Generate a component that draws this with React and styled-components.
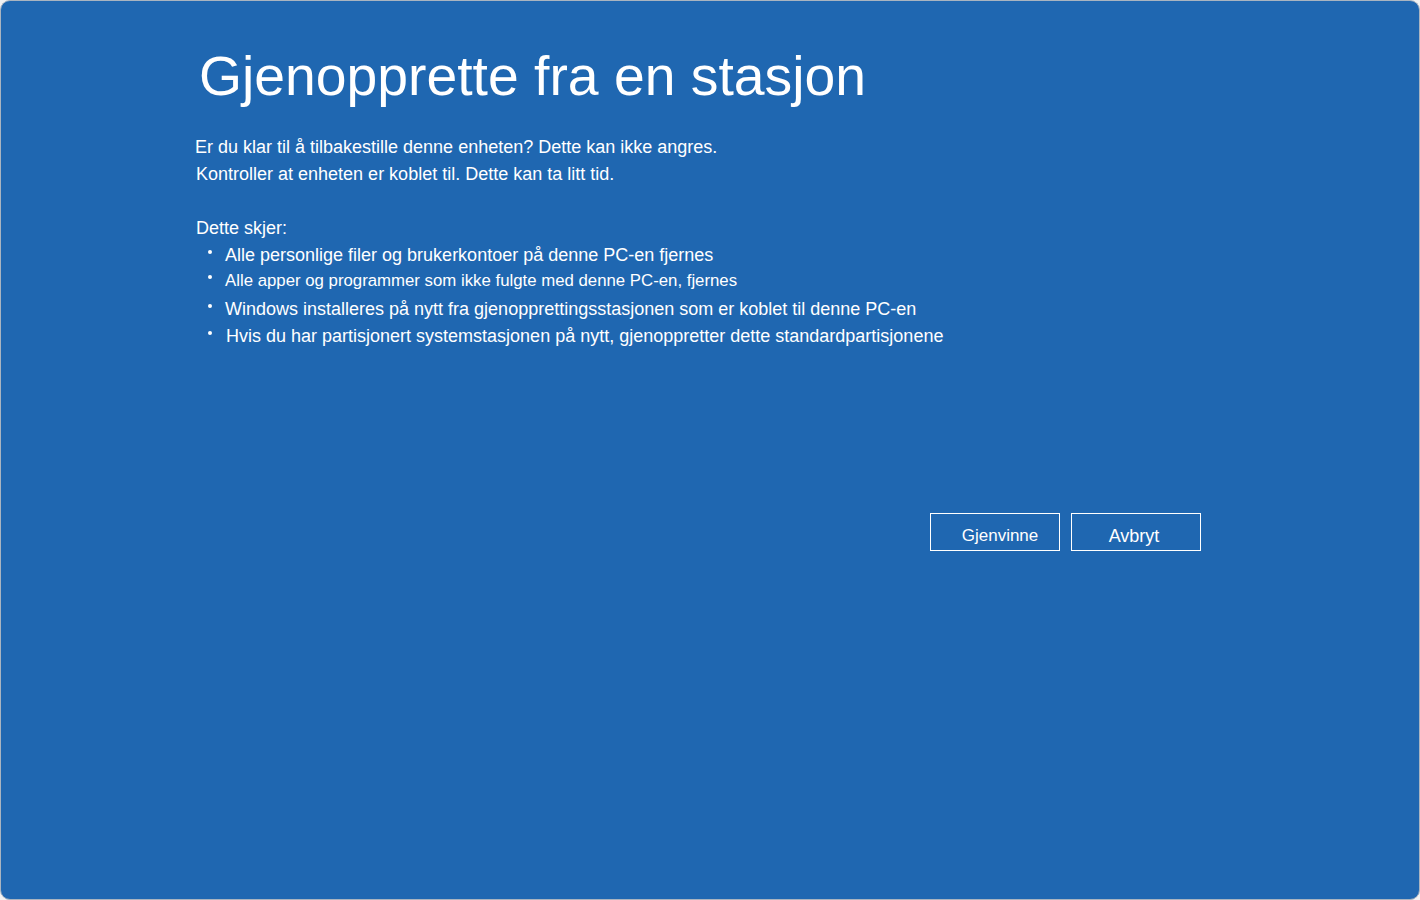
import React from "react";
import styled, { createGlobalStyle } from "styled-components";

const GlobalStyle = createGlobalStyle`
  html, body {
    margin: 0;
    padding: 0;
    background: #f2f2f2;
  }
  body {
    font-family: "Liberation Sans", Arial, sans-serif;
  }
`;

const Screen = styled.div`
  box-sizing: border-box;
  width: 1420px;
  height: 900px;
  background: #1f67b1;
  border: 1px solid #a9b4c0;
  border-radius: 10px;
  color: #ffffff;
  padding: 44px 0 0 194px;
  display: flex;
  flex-direction: column;
`;

const Title = styled.h1`
  margin: 0 0 0 4px;
  font-size: 55.3px;
  font-weight: 400;
  line-height: 63px;
  letter-spacing: 0;
`;

const Body = styled.div`
  margin-top: 26px;
  font-size: 18px;
  line-height: 27px;
`;

const Line = styled.p`
  margin: 0 0 0 ${(p) => p.$indent || 0}px;
`;

const Gap = styled.div`
  height: 27px;
`;

const List = styled.ul`
  list-style: none;
  margin: 0;
  padding: 0 0 0 30px;
`;

const Item = styled.li`
  position: relative;
  font-size: ${(p) => (p.$small ? "16.8px" : "18px")};
  line-height: 27px;
  margin-top: ${(p) => (p.$small ? "-2px" : "0")};
  margin-bottom: ${(p) => (p.$small ? "2px" : "0")};
  padding-left: ${(p) => p.$shift || 0}px;

  &::before {
    content: "";
    position: absolute;
    left: -17px;
    top: 8px;
    width: 4px;
    height: 4px;
    border-radius: 50%;
    background: #ffffff;
  }
`;

const Actions = styled.div`
  display: flex;
  gap: 11px;
  margin: 163px 0 0 735px;
`;

const Button = styled.button`
  box-sizing: border-box;
  width: 130px;
  height: 38px;
  padding: 8px ${(p) => (p.$small ? "0 0 10px" : "4px 0 0")};
  background: transparent;
  border: 1px solid #ffffff;
  color: #ffffff;
  font-family: "Liberation Sans", Arial, sans-serif;
  font-size: ${(p) => (p.$small ? "17px" : "18px")};
  cursor: pointer;
`;

export default function App() {
  return (
    <>
      <GlobalStyle />
      <Screen>
        <Title>Gjenopprette fra en stasjon</Title>
        <Body>
          <Line>Er du klar til å tilbakestille denne enheten? Dette kan ikke angres.</Line>
          <Line $indent={1}>Kontroller at enheten er koblet til. Dette kan ta litt tid.</Line>
          <Gap />
          <Line $indent={1}>Dette skjer:</Line>
          <List>
            <Item>Alle personlige filer og brukerkontoer på denne PC-en fjernes</Item>
            <Item $small>Alle apper og programmer som ikke fulgte med denne PC-en, fjernes</Item>
            <Item>Windows installeres på nytt fra gjenopprettingsstasjonen som er koblet til denne PC-en</Item>
            <Item $shift={1}>Hvis du har partisjonert systemstasjonen på nytt, gjenoppretter dette standardpartisjonene</Item>
          </List>
        </Body>
        <Actions>
          <Button $small>Gjenvinne</Button>
          <Button>Avbryt</Button>
        </Actions>
      </Screen>
    </>
  );
}
